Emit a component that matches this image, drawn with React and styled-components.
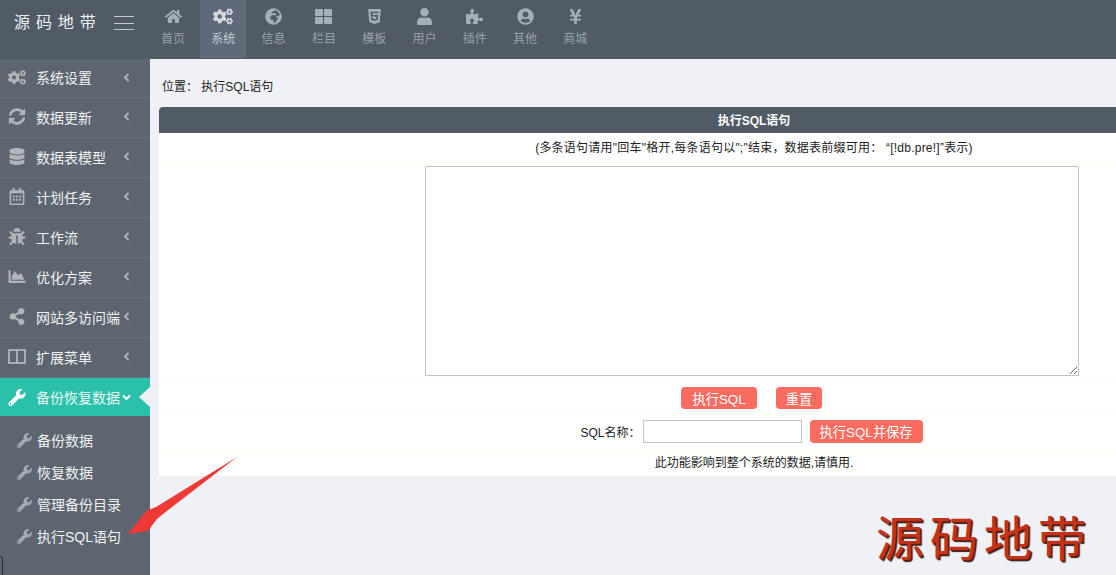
import styled, { createGlobalStyle } from 'styled-components'
import {
  FaAngleDown,
  FaAngleLeft,
  FaBug,
  FaChartArea,
  FaCogs,
  FaDatabase,
  FaGlobeAfrica,
  FaHome,
  FaHtml5,
  FaPuzzlePiece,
  FaRegCalendarAlt,
  FaShareAlt,
  FaSyncAlt,
  FaThLarge,
  FaUser,
  FaUserCircle,
  FaWrench,
  FaYenSign,
} from 'react-icons/fa'

const GlobalStyle = createGlobalStyle`
  html, body {
    margin: 0;
    padding: 0;
    height: 100%;
    overflow: hidden;
    background: #f0f1f7;
    font-family: "Liberation Sans", "Noto Sans CJK SC", sans-serif;
    font-size: 12px;
    color: #333;
  }
  * { box-sizing: border-box; }
`

const Page = styled.div`
  position: relative;
  width: 1116px;
  height: 575px;
  overflow: hidden;
  display: grid;
  grid-template-rows: 59px 1fr;
`

const TopBar = styled.header`
  display: flex;
  background: #505b66;
`

const Brand = styled.div`
  width: 150px;
  display: flex;
  align-items: flex-start;
  padding: 13px 0 0 14px;
  gap: 18px;
`

const BrandName = styled.div`
  width: 82px;
  color: #eef0f2;
  font-size: 16px;
  line-height: 20px;
  letter-spacing: 5.9px;
  white-space: nowrap;
`

const Burger = styled.div`
  width: 20px;
  height: 14px;
  margin-top: 3px;
  display: flex;
  flex-direction: column;
  justify-content: space-between;
  span {
    display: block;
    height: 1px;
    background: #c3c8cd;
  }
`

const Tabs = styled.nav`
  display: flex;
  gap: 4.3px;
`

const Tab = styled.div`
  width: 46px;
  height: 58px;
  display: flex;
  flex-direction: column;
  align-items: center;
  padding-top: 8px;
  color: ${(p) => (p.$active ? '#c5cbd2' : '#98a1aa')};
  background: ${(p) => (p.$active ? '#5e6a79' : 'transparent')};
  font-size: 12px;
  svg {
    width: ${(p) => (p.$active ? 20 : 17)}px;
    height: 17px;
    color: ${(p) => (p.$active ? '#d5d9dd' : '#a6afb8')};
  }
  span {
    margin-top: 5px;
    line-height: 18px;
  }
`

const Body = styled.div`
  display: grid;
  grid-template-columns: 150px 1fr;
  min-height: 0;
`

const Sidebar = styled.aside`
  background: #5c6570;
`

const MenuItem = styled.div`
  position: relative;
  height: ${(p) => (p.$active ? '38px' : '40px')};
  display: flex;
  align-items: center;
  padding: 0 0 ${(p) => (p.$active ? '0' : '2px')} 8px;
  color: #fff;
  font-size: 14px;
  background: ${(p) => (p.$active ? '#2bc0a9' : 'transparent')};
  border-bottom: ${(p) => (p.$active ? '0' : '1px solid #68717b')};
  white-space: nowrap;
  &:first-child {
    height: 39px;
  }
  ${(p) =>
    p.$active &&
    `&::after {
      content: '';
      position: absolute;
      right: 0;
      top: 9px;
      border: 10px solid transparent;
      border-left: 0;
      border-right: 11px solid #f0f1f7;
    }`}
`

const MenuIcon = styled.span`
  width: 28px;
  flex: none;
  display: flex;
  color: ${(p) => (p.$active ? '#fff' : '#b0b5ba')};
  svg {
    width: 18px;
    height: 17px;
  }
`

const MenuLabel = styled.span`
  width: 84px;
  flex: none;
  color: ${(p) => (p.$active ? '#e9f8f5' : '#f0f1f2')};
`

const Caret = styled.span`
  display: flex;
  color: ${(p) => (p.$active ? '#fff' : '#a9afb5')};
  svg {
    width: 13px;
    height: 13px;
  }
`

const SubMenu = styled.div`
  padding-top: 8px;
`

const SubItem = styled.div`
  height: 32px;
  display: flex;
  align-items: center;
  padding-left: 17px;
  gap: 5px;
  color: #f0f1f2;
  font-size: 14px;
  svg {
    width: 15px;
    height: 15px;
    color: #a3a8ae;
  }
`

const Main = styled.main`
  padding: 18px 0 0 9px;
  overflow: hidden;
`

const Crumb = styled.div`
  height: 30px;
  padding: 1px 0 0 3px;
  line-height: 18px;
  color: #222;
`

const Panel = styled.section`
  width: 1190px;
  background: #fff;
`

const PanelHead = styled.div`
  height: 26px;
  background: #505b66;
  border-radius: 4px 4px 0 0;
  color: #fff;
  font-weight: 700;
  line-height: 28px;
  text-align: center;
`

const Row = styled.div`
  height: ${(p) => p.$height}px;
  display: flex;
  align-items: center;
  justify-content: center;
  padding-right: ${(p) => p.$shift || 0}px;
  gap: ${(p) => p.$gap || 0}px;
  border-bottom: 1px solid #fffdf3;
  color: #222;
  letter-spacing: ${(p) => p.$spread || 0}px;
  &:last-child {
    border-bottom: 0;
    padding-bottom: 2px;
  }
`

const SqlBox = styled.textarea`
  width: 654px;
  height: 210px;
  margin: 0;
  padding: 2px;
  background: #fff;
  border: 1px solid #c4c4c4;
  outline: none;
`

const Button = styled.button`
  height: ${(p) => (p.$tall ? 23 : 22)}px;
  width: ${(p) => p.$width}px;
  padding: 0;
  border: 0;
  border-radius: 4px;
  background: #f96c5f;
  color: #fff;
  font-family: inherit;
  font-size: 13.3px;
`

const NameLabel = styled.label`
  margin-right: 2px;
`

const NameInput = styled.input`
  width: 159px;
  height: 23px;
  margin: 0 8px 0 0;
  border: 1px solid #c4c4c4;
  background: #fff;
  outline: none;
`

const Watermark = styled.div`
  position: absolute;
  left: 876px;
  bottom: 5px;
  font-size: 48px;
  line-height: 60px;
  font-weight: 400;
  letter-spacing: 6px;
  white-space: nowrap;
  color: #c2331a;
  text-shadow: 1px 1px 0 #6d1a0c, 2px 2px 1px #2a1a18;
`

const Arrow = styled.svg`
  position: absolute;
  left: 120px;
  top: 450px;
  width: 125px;
  height: 95px;
`

const CornerMark = styled.div`
  position: absolute;
  left: -2px;
  bottom: -2px;
  width: 5px;
  height: 21px;
  border: 1px solid #2b2f35;
  border-radius: 2px;
`

// FA4 "columns" is an outline, the package's version has one side filled
const ColumnsIcon = () => (
  <svg viewBox="0 0 18 17" fill="none" stroke="currentColor" strokeWidth="1.8">
    <rect x="1" y="2" width="16" height="13" />
    <path d="M9 2v13" />
  </svg>
)

const topTabs = [
  { icon: FaHome, label: '首页' },
  { icon: FaCogs, label: '系统', active: true },
  { icon: FaGlobeAfrica, label: '信息' },
  { icon: FaThLarge, label: '栏目' },
  { icon: FaHtml5, label: '模板' },
  { icon: FaUser, label: '用户' },
  { icon: FaPuzzlePiece, label: '插件' },
  { icon: FaUserCircle, label: '其他' },
  { icon: FaYenSign, label: '商城' },
]

const menu = [
  { icon: FaCogs, label: '系统设置' },
  { icon: FaSyncAlt, label: '数据更新' },
  { icon: FaDatabase, label: '数据表模型' },
  { icon: FaRegCalendarAlt, label: '计划任务' },
  { icon: FaBug, label: '工作流' },
  { icon: FaChartArea, label: '优化方案' },
  { icon: FaShareAlt, label: '网站多访问端' },
  { icon: ColumnsIcon, label: '扩展菜单' },
]

const subMenu = ['备份数据', '恢复数据', '管理备份目录', '执行SQL语句']

export default function App() {
  return (
    <Page>
      <GlobalStyle />
      <TopBar>
        <Brand>
          <BrandName>源码地带</BrandName>
          <Burger>
            <span />
            <span />
            <span />
          </Burger>
        </Brand>
        <Tabs>
          {topTabs.map(({ icon: Icon, label, active }) => (
            <Tab key={label} $active={active}>
              <Icon />
              <span>{label}</span>
            </Tab>
          ))}
        </Tabs>
      </TopBar>
      <Body>
        <Sidebar>
          {menu.map(({ icon: Icon, label }) => (
            <MenuItem key={label}>
              <MenuIcon>
                <Icon />
              </MenuIcon>
              <MenuLabel>{label}</MenuLabel>
              <Caret>
                <FaAngleLeft />
              </Caret>
            </MenuItem>
          ))}
          <MenuItem $active>
            <MenuIcon $active>
              <FaWrench />
            </MenuIcon>
            <MenuLabel $active>备份恢复数据</MenuLabel>
            <Caret $active>
              <FaAngleDown />
            </Caret>
          </MenuItem>
          <SubMenu>
            {subMenu.map((label) => (
              <SubItem key={label}>
                <FaWrench />
                {label}
              </SubItem>
            ))}
          </SubMenu>
        </Sidebar>
        <Main>
          <Crumb>位置： 执行SQL语句</Crumb>
          <Panel>
            <PanelHead>执行SQL语句</PanelHead>
            <Row $height={28} $spread={0.23}>
              (多条语句请用"回车"格开,每条语句以";"结束，数据表前缀可用： “[!db.pre!]”表示)
            </Row>
            <Row $height={221} $shift={5}>
              <SqlBox />
            </Row>
            <Row $height={33} $shift={5} $gap={19}>
              <Button $width={76}>执行SQL</Button>
              <Button $width={46}>重置</Button>
            </Row>
            <Row $height={34} $shift={5}>
              <NameLabel>SQL名称：</NameLabel>
              <NameInput />
              <Button $width={113} $tall>
                执行SQL并保存
              </Button>
            </Row>
            <Row $height={27}>此功能影响到整个系统的数据,请慎用.</Row>
          </Panel>
        </Main>
      </Body>
      <Arrow viewBox="0 0 125 95">
        <polygon points="117,7 36,57 26,61 8,84 28,81 37,69 43,64" fill="#ee3a36" />
      </Arrow>
      <Watermark>源码地带</Watermark>
      <CornerMark />
    </Page>
  )
}
